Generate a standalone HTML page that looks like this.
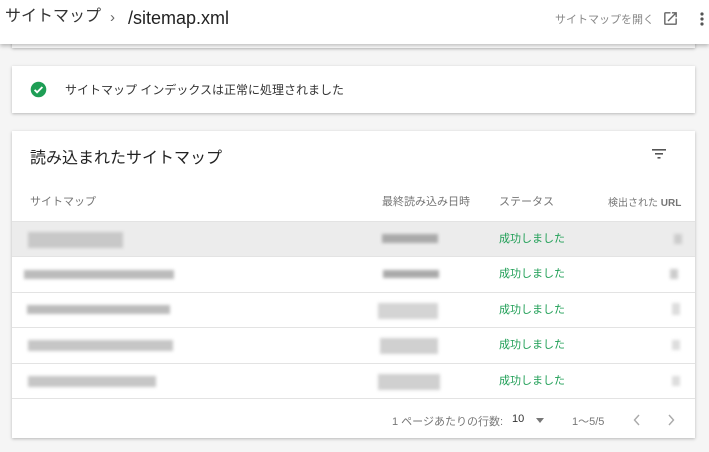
<!DOCTYPE html>
<html><head><meta charset="utf-8"><style>
*{margin:0;padding:0;box-sizing:border-box}
body{width:709px;height:452px;overflow:hidden;background:#f5f5f5;font-family:"Liberation Sans","Noto Sans CJK JP",sans-serif;position:relative}
.hdr{position:absolute;left:0;top:0;width:709px;height:44px;background:#fff;box-shadow:0 2px 4px rgba(0,0,0,.25);z-index:3}
.card{position:absolute;left:12px;width:683px;background:#fff;box-shadow:0 1px 3px rgba(0,0,0,.25)}
.abs{position:absolute}
.b{position:absolute;background:#bbb;filter:blur(1.5px)}
.row{position:absolute;left:0;width:683px;height:36px;border-top:1px solid #e3e3e3}
.ok{position:absolute;left:487px;font-size:11px;color:#1e9e55}
.th{position:absolute;top:62px;font-size:11px;color:#757575}
</style></head><body>
<div class="card" style="top:20px;height:28px"></div>
<div class="hdr">
<div class="abs" style="left:5px;top:5px;font-size:16px;line-height:24px;color:#333">サイトマップ</div>
<div class="abs" style="left:110px;top:6px;font-size:15px;line-height:24px;color:#666">›</div>
<div class="abs" style="left:128px;top:8px;font-size:18px;color:#222">/sitemap.xml</div>
<div class="abs" style="left:555px;top:11px;font-size:11px;color:#888">サイトマップを開く</div>
<svg class="abs" style="left:662px;top:10px" width="17" height="17" viewBox="0 0 24 24"><path d="M19 19H5V5h7V3H5a2 2 0 0 0-2 2v14a2 2 0 0 0 2 2h14a2 2 0 0 0 2-2v-7h-2v7zM14 3v2h3.6l-9.8 9.8 1.4 1.4L19 6.4V10h2V3h-7z" fill="#666"/></svg>
<svg class="abs" style="left:695px;top:10px" width="14" height="18" viewBox="0 0 14 18"><circle cx="7" cy="4" r="1.6" fill="#555"/><circle cx="7" cy="9" r="1.6" fill="#555"/><circle cx="7" cy="14" r="1.6" fill="#555"/></svg>
</div>
<div class="card" style="top:66px;height:47px">
<svg class="abs" style="left:18px;top:15px" width="17" height="17" viewBox="0 0 24 24"><circle cx="12" cy="12" r="11" fill="#1e9e55"/><path d="M6.5 12.5l3.5 3.5 7.5-7.5" stroke="#fff" stroke-width="2.6" fill="none"/></svg>
<div class="abs" style="left:53px;top:15px;font-size:12px;color:#333">サイトマップ インデックスは正常に処理されました</div>
</div>
<div class="card" style="top:131px;height:307px">
<div class="abs" style="left:18px;top:13px;font-size:16px;color:#222">読み込まれたサイトマップ</div>
<svg class="abs" style="left:640px;top:17px" width="14" height="12" viewBox="0 0 14 12"><rect x="0" y="1" width="14" height="1.6" fill="#555"/><rect x="3" y="5" width="8" height="1.6" fill="#555"/><rect x="5.5" y="9" width="3" height="1.6" fill="#555"/></svg>
<div class="th" style="left:18px">サイトマップ</div>
<div class="th" style="left:370px">最終読み込み日時</div>
<div class="th" style="left:487px">ステータス</div>
<div class="th" style="left:596px;font-size:10px;top:63px">検出された <b>URL</b></div>
<div class="row" style="top:90px;background:#ececec">
<div class="b" style="left:16px;top:10px;width:95px;height:16px;background:#c8c8c8"></div>
<div class="b" style="left:370px;top:12px;width:56px;height:9px;background:#aaa"></div>
<div class="ok" style="top:8px">成功しました</div>
<div class="b" style="left:662px;top:12px;width:8px;height:10px;background:#ccc"></div></div>
<div class="row" style="top:125px">
<div class="b" style="left:12px;top:13px;width:150px;height:9px"></div>
<div class="b" style="left:371px;top:13px;width:56px;height:8px;background:#aaa"></div>
<div class="ok" style="top:8px">成功しました</div>
<div class="b" style="left:658px;top:12px;width:8px;height:10px;background:#ccc"></div></div>
<div class="row" style="top:161px">
<div class="b" style="left:15px;top:12px;width:143px;height:9px"></div>
<div class="b" style="left:366px;top:10px;width:60px;height:16px;background:#d4d4d4"></div>
<div class="ok" style="top:8px">成功しました</div>
<div class="b" style="left:660px;top:10px;width:8px;height:12px;background:#ddd"></div></div>
<div class="row" style="top:196px">
<div class="b" style="left:16px;top:12px;width:145px;height:11px;background:#c6c6c6"></div>
<div class="b" style="left:368px;top:10px;width:58px;height:16px;background:#d0d0d0"></div>
<div class="ok" style="top:8px">成功しました</div>
<div class="b" style="left:660px;top:12px;width:8px;height:10px;background:#ddd"></div></div>
<div class="row" style="top:232px">
<div class="b" style="left:16px;top:12px;width:128px;height:11px;background:#c6c6c6"></div>
<div class="b" style="left:366px;top:10px;width:62px;height:16px;background:#d0d0d0"></div>
<div class="ok" style="top:8px">成功しました</div>
<div class="b" style="left:660px;top:12px;width:8px;height:10px;background:#ddd"></div></div>
<div class="row" style="top:267px;height:40px">
<div class="abs" style="left:380px;top:14px;font-size:11px;color:#777">1 ページあたりの行数:</div>
<div class="abs" style="left:500px;top:14px;font-size:11px;color:#333">10</div>
<div class="abs" style="left:524px;top:19px;width:0;height:0;border-left:4px solid transparent;border-right:4px solid transparent;border-top:5px solid #777"></div>
<div class="abs" style="left:560px;top:14px;font-size:11px;color:#777">1〜5/5</div>
<svg class="abs" style="left:621px;top:15px" width="8" height="12" viewBox="0 0 8 12"><path d="M6 1L1.5 6 6 11" stroke="#aaa" stroke-width="1.4" fill="none"/></svg>
<svg class="abs" style="left:655px;top:15px" width="8" height="12" viewBox="0 0 8 12"><path d="M2 1l4.5 5L2 11" stroke="#aaa" stroke-width="1.4" fill="none"/></svg>
</div>
</div>
</body></html>
